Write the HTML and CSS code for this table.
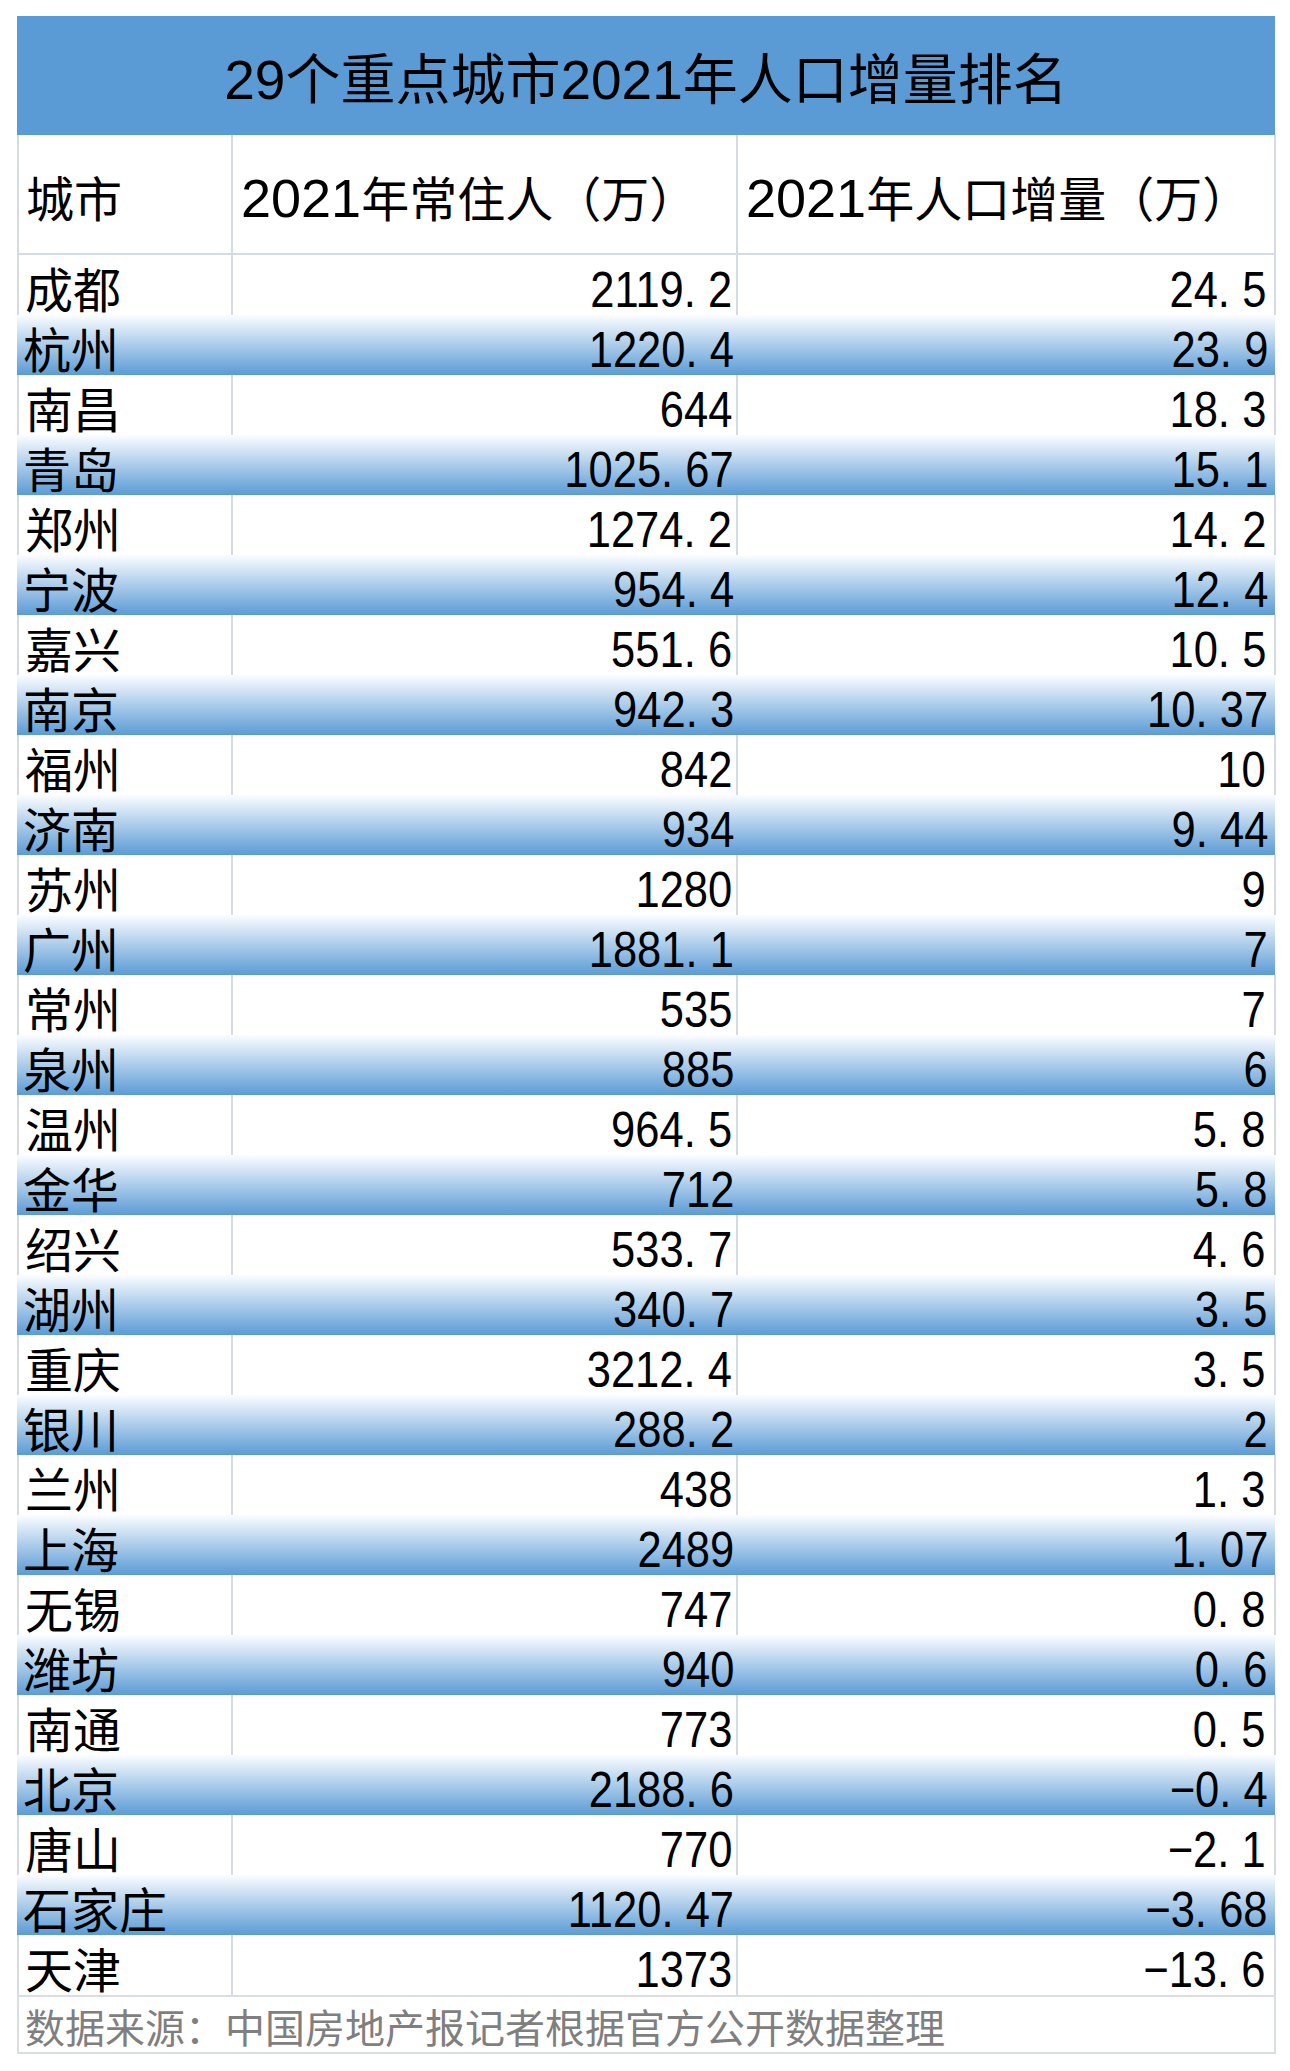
FILE: index.html
```html
<!DOCTYPE html>
<html lang="zh-CN">
<head>
<meta charset="utf-8">
<title>29个重点城市2021年人口增量排名</title>
<link rel="stylesheet" href="styles.css">
</head>
<body>
<div class="sheet">
  <div class="title"><span class="num">29</span>个重点城市<span class="num">2021</span>年人口增量排名</div>
  <div class="row head">
    <div class="cell name">城市</div>
    <div class="cell hd"><span class="num">2021</span>年常住人（万）</div>
    <div class="cell hd"><span class="num">2021</span>年人口增量（万）</div>
  </div>
  <div class="row"><div class="cell name">成都</div><div class="cell val"><span>2119<i>.</i>2</span></div><div class="cell val"><span>24<i>.</i>5</span></div></div>
  <div class="row alt"><div class="cell name">杭州</div><div class="cell val"><span>1220<i>.</i>4</span></div><div class="cell val"><span>23<i>.</i>9</span></div></div>
  <div class="row"><div class="cell name">南昌</div><div class="cell val"><span>644</span></div><div class="cell val"><span>18<i>.</i>3</span></div></div>
  <div class="row alt"><div class="cell name">青岛</div><div class="cell val"><span>1025<i>.</i>67</span></div><div class="cell val"><span>15<i>.</i>1</span></div></div>
  <div class="row"><div class="cell name">郑州</div><div class="cell val"><span>1274<i>.</i>2</span></div><div class="cell val"><span>14<i>.</i>2</span></div></div>
  <div class="row alt"><div class="cell name">宁波</div><div class="cell val"><span>954<i>.</i>4</span></div><div class="cell val"><span>12<i>.</i>4</span></div></div>
  <div class="row"><div class="cell name">嘉兴</div><div class="cell val"><span>551<i>.</i>6</span></div><div class="cell val"><span>10<i>.</i>5</span></div></div>
  <div class="row alt"><div class="cell name">南京</div><div class="cell val"><span>942<i>.</i>3</span></div><div class="cell val"><span>10<i>.</i>37</span></div></div>
  <div class="row"><div class="cell name">福州</div><div class="cell val"><span>842</span></div><div class="cell val"><span>10</span></div></div>
  <div class="row alt"><div class="cell name">济南</div><div class="cell val"><span>934</span></div><div class="cell val"><span>9<i>.</i>44</span></div></div>
  <div class="row"><div class="cell name">苏州</div><div class="cell val"><span>1280</span></div><div class="cell val"><span>9</span></div></div>
  <div class="row alt"><div class="cell name">广州</div><div class="cell val"><span>1881<i>.</i>1</span></div><div class="cell val"><span>7</span></div></div>
  <div class="row"><div class="cell name">常州</div><div class="cell val"><span>535</span></div><div class="cell val"><span>7</span></div></div>
  <div class="row alt"><div class="cell name">泉州</div><div class="cell val"><span>885</span></div><div class="cell val"><span>6</span></div></div>
  <div class="row"><div class="cell name">温州</div><div class="cell val"><span>964<i>.</i>5</span></div><div class="cell val"><span>5<i>.</i>8</span></div></div>
  <div class="row alt"><div class="cell name">金华</div><div class="cell val"><span>712</span></div><div class="cell val"><span>5<i>.</i>8</span></div></div>
  <div class="row"><div class="cell name">绍兴</div><div class="cell val"><span>533<i>.</i>7</span></div><div class="cell val"><span>4<i>.</i>6</span></div></div>
  <div class="row alt"><div class="cell name">湖州</div><div class="cell val"><span>340<i>.</i>7</span></div><div class="cell val"><span>3<i>.</i>5</span></div></div>
  <div class="row"><div class="cell name">重庆</div><div class="cell val"><span>3212<i>.</i>4</span></div><div class="cell val"><span>3<i>.</i>5</span></div></div>
  <div class="row alt"><div class="cell name">银川</div><div class="cell val"><span>288<i>.</i>2</span></div><div class="cell val"><span>2</span></div></div>
  <div class="row"><div class="cell name">兰州</div><div class="cell val"><span>438</span></div><div class="cell val"><span>1<i>.</i>3</span></div></div>
  <div class="row alt"><div class="cell name">上海</div><div class="cell val"><span>2489</span></div><div class="cell val"><span>1<i>.</i>07</span></div></div>
  <div class="row"><div class="cell name">无锡</div><div class="cell val"><span>747</span></div><div class="cell val"><span>0<i>.</i>8</span></div></div>
  <div class="row alt"><div class="cell name">潍坊</div><div class="cell val"><span>940</span></div><div class="cell val"><span>0<i>.</i>6</span></div></div>
  <div class="row"><div class="cell name">南通</div><div class="cell val"><span>773</span></div><div class="cell val"><span>0<i>.</i>5</span></div></div>
  <div class="row alt"><div class="cell name">北京</div><div class="cell val"><span>2188<i>.</i>6</span></div><div class="cell val"><span>−0<i>.</i>4</span></div></div>
  <div class="row"><div class="cell name">唐山</div><div class="cell val"><span>770</span></div><div class="cell val"><span>−2<i>.</i>1</span></div></div>
  <div class="row alt"><div class="cell name">石家庄</div><div class="cell val"><span>1120<i>.</i>47</span></div><div class="cell val"><span>−3<i>.</i>68</span></div></div>
  <div class="row"><div class="cell name">天津</div><div class="cell val"><span>1373</span></div><div class="cell val"><span>−13<i>.</i>6</span></div></div>
  <div class="foot">数据来源：中国房地产报记者根据官方公开数据整理</div>
</div>
</body>
</html>
```

FILE: styles.css
```css
html, body {
  margin: 0;
  padding: 0;
  background: #ffffff;
}

body {
  font-family: "Noto Sans CJK SC", "Noto Sans", sans-serif;
  color: #000000;
}

.sheet {
  width: 1259px;
  margin: 16px 0 0 17px;
}

.num {
  font-family: "Liberation Sans", sans-serif;
}

.title {
  box-sizing: border-box;
  height: 119px;
  width: 1258px;
  background: #5b9bd5;
  text-align: center;
  font-size: 55px;
  line-height: 55px;
  padding-top: 32px;
  white-space: nowrap;
}

.row {
  display: grid;
  grid-template-columns: 216px 505px 538px;
  height: 60px;
}

.row.head {
  height: 120px;
  border-bottom: 2px solid #d6dbe3;
  box-sizing: border-box;
}

.cell {
  box-sizing: border-box;
  white-space: nowrap;
}

.row:not(.alt) .cell {
  border-right: 2px solid #d6dbe3;
}

.row:not(.alt) .cell:first-child {
  border-left: 2px solid #d6dbe3;
}

.row.alt {
  background: linear-gradient(to bottom, #fbfdff 0%, #5b9bd5 100%);
  width: 1258px;
}

.name {
  font-size: 48px;
  line-height: 48px;
  padding: 8px 0 0 6px;
}

.val {
  font-family: "Liberation Sans", sans-serif;
  font-size: 50px;
  line-height: 44px;
  padding: 13px 4px 0 0;
  text-align: right;
}

.val span {
  display: inline-block;
  transform: scaleX(0.87);
  transform-origin: right center;
}

.val i {
  font-style: normal;
  margin-right: 14px;
}

.row .val:last-child {
  padding-right: 8px;
}

.head .cell {
  font-size: 48px;
  line-height: 48px;
  padding-top: 37px;
}

.head .name {
  padding-left: 7px;
}

.head .hd {
  padding-left: 8px;
}

.head .num {
  font-size: 54px;
}

.foot {
  box-sizing: border-box;
  height: 59px;
  border: 2px solid #d9dde4;
  color: #7f7f7f;
  font-size: 40px;
  line-height: 40px;
  padding: 9px 0 0 6px;
  white-space: nowrap;
}
```
